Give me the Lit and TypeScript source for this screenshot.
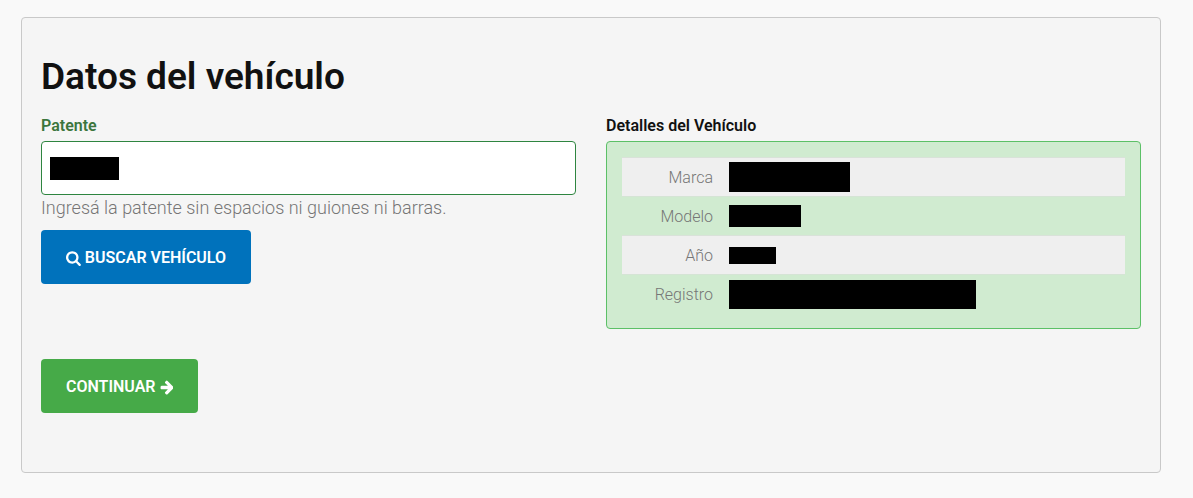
import { LitElement, html, css } from "lit";
import { customElement } from "lit/decorators.js";
import { styleMap } from "lit/directives/style-map.js";

interface Detail {
  label: string;
  width: number;
  height: number;
}

const DETAILS: Detail[] = [
  { label: "Marca", width: 121, height: 30 },
  { label: "Modelo", width: 72, height: 22 },
  { label: "Año", width: 47, height: 17 },
  { label: "Registro", width: 247, height: 29 },
];

@customElement("app-root")
export class AppRoot extends LitElement {
  static styles = css`
    :host {
      display: block;
      box-sizing: border-box;
      min-height: 100vh;
      padding: 17px 32px 25px 21px;
      background: #f9f9f9;
      color: #111;
      font-family: Roboto, "Liberation Sans", sans-serif;
      font-size: 16px;
      line-height: 24px;
    }
    * {
      box-sizing: border-box;
    }
    .well {
      padding: 38px 19px 59px;
      border: 1px solid #c9c9c9;
      border-radius: 4px;
      background: #f5f5f5;
    }
    .title {
      margin: 0 0 16px;
      font-size: 37px;
      line-height: 42px;
      font-weight: 600;
    }
    .columns {
      display: grid;
      grid-template-columns: 1fr 1fr;
      gap: 30px;
      align-items: start;
    }
    .label {
      display: block;
      margin: 0 0 3px;
      line-height: 24px;
      font-weight: 600;
    }
    .label.valid {
      color: #3c763d;
    }
    .field {
      position: relative;
    }
    .input {
      display: block;
      width: 100%;
      height: 54px;
      padding: 8px;
      border: 1px solid #2e8540;
      border-radius: 4px;
      background: #fff;
      font: inherit;
    }
    .cover {
      position: absolute;
      left: 9px;
      top: 16px;
      width: 69px;
      height: 23px;
      background: #000;
    }
    .help {
      margin: 0 0 9px;
      font-size: 18px;
      line-height: 26px;
      font-weight: 300;
      color: #767676;
    }
    .button {
      display: inline-flex;
      align-items: center;
      justify-content: center;
      gap: 4px;
      height: 54px;
      padding: 2px 25px 0;
      border: 0;
      border-radius: 4px;
      color: #fff;
      font: inherit;
      font-weight: 600;
      text-transform: uppercase;
      white-space: nowrap;
      cursor: pointer;
    }
    .search {
      background: #0072bc;
    }
    .next {
      background: #46aa48;
    }
    .icon {
      height: 16px;
      fill: currentColor;
    }
    .details {
      padding: 15px;
      border: 1px solid #5cc067;
      border-radius: 4px;
      background: #d0ebd0;
    }
    .table {
      width: 100%;
      border-collapse: separate;
      border-spacing: 0;
    }
    .key,
    .value {
      height: 39px;
      padding: 0 8px;
      border-top: 1px solid #d9e2d9;
      vertical-align: middle;
    }
    .row:nth-child(even) .key,
    .row:nth-child(even) .value {
      border-top-color: #d5e4d5;
    }
    .row:nth-child(odd) .key,
    .row:nth-child(odd) .value {
      background: #efefef;
    }
    .key {
      width: 99px;
      padding-top: 2px;
      text-align: right;
      font-weight: 300;
      color: #767676;
    }
    .bar {
      display: block;
      background: #000;
    }
    .footer {
      margin-top: 30px;
    }
  `;

  render() {
    return html`
      <main class="well">
        <h2 class="title">Datos del vehículo</h2>
        <div class="columns">
          <section>
            <label class="label valid" for="patente">Patente</label>
            <div class="field">
              <input class="input" id="patente" type="text" aria-describedby="ayuda" />
              <span class="cover"></span>
            </div>
            <p class="help" id="ayuda">Ingresá la patente sin espacios ni guiones ni barras.</p>
            <button class="button search" type="button">
              <svg class="icon" viewBox="0 0 1664 1792" aria-hidden="true">
                <path d="M1152 832q0-185-131.5-316.5t-316.5-131.5-316.5 131.5-131.5 316.5 131.5 316.5 316.5 131.5 316.5-131.5 131.5-316.5zm512 832q0 52-38 90t-90 38q-54 0-90-38l-343-342q-179 124-399 124-143 0-273.5-55.5t-225-150-150-225-55.5-273.5 55.5-273.5 150-225 225-150 273.5-55.5 273.5 55.5 225 150 150 225 55.5 273.5q0 220-124 399l343 343q37 37 37 90z" />
              </svg>
              <span>Buscar vehículo</span>
            </button>
          </section>
          <section>
            <div class="label" id="detalles">Detalles del Vehículo</div>
            <div class="details">
              <table class="table" aria-labelledby="detalles">
                <tbody>
                  ${DETAILS.map(
                    (d) => html`
                      <tr class="row">
                        <th class="key" scope="row">${d.label}</th>
                        <td class="value">
                          <span
                            class="bar"
                            style=${styleMap({ width: `${d.width}px`, height: `${d.height}px` })}
                          ></span>
                        </td>
                      </tr>
                    `
                  )}
                </tbody>
              </table>
            </div>
          </section>
        </div>
        <div class="footer">
          <button class="button next" type="button">
            <span>Continuar</span>
            <svg class="icon" viewBox="128 0 1536 1792" aria-hidden="true">
              <path d="M1664 960q0 54-37 91l-651 651q-39 37-91 37-51 0-90-37l-75-75q-38-38-38-91t38-91l293-293h-704q-52 0-84.500-37.500t-32.500-90.500v-128q0-53 32.500-90.500t84.500-37.500h704l-293-294q-38-36-38-90t38-90l75-75q38-38 90-38 53 0 91 38l651 651q37 35 37 90z" />
            </svg>
          </button>
        </div>
      </main>
    `;
  }
}
